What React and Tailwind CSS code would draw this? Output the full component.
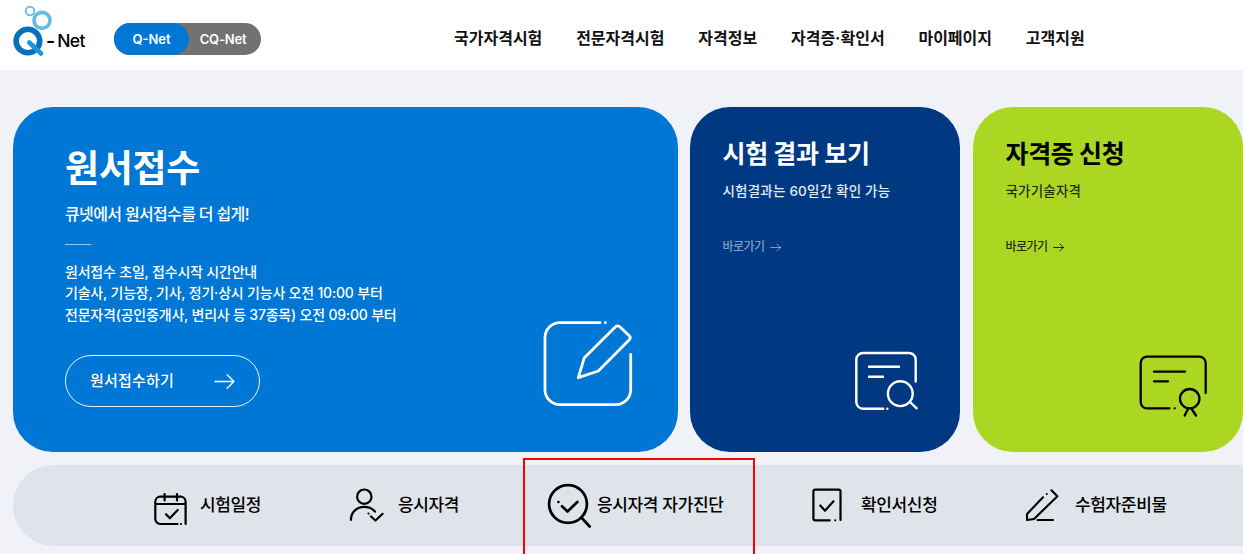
import React from "react";

const MENU = ["국가자격시험", "전문자격시험", "자격정보", "자격증·확인서", "마이페이지", "고객지원"];

function BrandMark() {
    return (
        <svg width="40" height="54" viewBox="0 0 40 54" fill="none" className="shrink-0">
            <circle cx="17" cy="7" r="4.3" stroke="#6cc0e5" strokeWidth="2" />
            <circle cx="29" cy="16.4" r="8" stroke="#62bce3" strokeWidth="3.6" />
            <circle cx="14.9" cy="37" r="11.8" stroke="#0870bd" strokeWidth="5.6" />
            <path d="M16.3 38.5L28 49.5" stroke="#1797d3" strokeWidth="4.6" strokeLinecap="round" />
        </svg>
    );
}

function Arrow({ size, strokeWidth }) {
    return (
        <svg width={size} height={size} viewBox="0 0 20 20" fill="none" stroke="currentColor" strokeWidth={strokeWidth} strokeLinecap="round" strokeLinejoin="round">
            <path d="M1 10H19M12.5 3.5L19 10L12.5 16.5" />
        </svg>
    );
}

function LineIcon({ width, height, strokeWidth, className = "", children }) {
    return (
        <svg width={width} height={height} viewBox={`0 0 ${width} ${height}`} fill="none" stroke="currentColor" strokeWidth={strokeWidth} strokeLinecap="round" strokeLinejoin="round" className={`shrink-0 ${className}`}>
            {children}
        </svg>
    );
}

function ShortcutCard({ title, text, className, textClass, linkClass, children }) {
    return (
        <article className={`flex h-[345px] shrink-0 flex-col rounded-[40px] pt-[31px] pl-[32.5px] ${className}`}>
            <h2 className="text-[25px] leading-8 font-bold tracking-[-0.35px]">{title}</h2>
            <p className={`mt-[11px] text-[13.5px] leading-5 ${textClass}`}>{text}</p>
            <a href="#" className={`mt-[36px] flex items-center gap-[5px] text-[12px] leading-5 font-medium tracking-[-0.5px] ${linkClass}`}>
                바로가기
                <Arrow size={11} strokeWidth={1.8} />
            </a>
            {children}
        </article>
    );
}

function QuickItem({ label, className, children }) {
    return (
        <a href="#" className={`flex h-12 shrink-0 items-center whitespace-nowrap ${className}`}>
            {children}
            <span className="pb-px">{label}</span>
        </a>
    );
}

export default function App() {
    return (
        <div className="relative h-[554px] w-[1243px] overflow-hidden bg-[#f1f2f7] font-['Inter','Noto_Sans_CJK_KR',sans-serif] text-black">
            <header className="flex h-[70px] items-center bg-white pl-[13px]">
                <div className="flex h-[62px] w-[101px] shrink-0 items-start">
                    <BrandMark />
                    <span className="mt-[25px] -ml-[7px] flex items-center text-[17.5px] leading-6 font-medium tracking-[-0.6px]">
                        <span className="mr-[2.5px] text-[20px] font-semibold">-</span>Net
                    </span>
                </div>
                <div className="mt-2 flex h-8 w-[147px] shrink-0 items-center rounded-full bg-[#727272] text-[13px] font-semibold text-white">
                    <span className="flex h-8 w-[75px] items-center justify-center rounded-full bg-[#0077d5] pt-px">Q-Net</span>
                    <span className="flex-1 pt-px pr-[4px] text-center tracking-[-0.2px]">CQ-Net</span>
                </div>
                <nav className="mt-[6px] ml-[193px] flex gap-[33.8px] text-[16px] leading-6 font-bold whitespace-nowrap text-[#111]">
                    {MENU.map((item) => (
                        <a key={item} href="#">{item}</a>
                    ))}
                </nav>
            </header>

            <main className="pt-[37px] pl-[13px]">
                <section className="flex">
                    <article className="flex h-[345px] w-[665px] shrink-0 justify-between rounded-[40px] bg-[#0077d5] pt-[38px] pl-[52px] text-white">
                        <div>
                            <h1 className="text-[37px] leading-[48px] font-bold tracking-[-0.3px]">원서접수</h1>
                            <p className="mt-[9px] text-[16px] leading-6 font-medium tracking-[-0.65px]">큐넷에서 원서접수를 더 쉽게!</p>
                            <div className="mt-[18px] h-px w-[26px] bg-white/60" />
                            <p className="mt-[16px] text-[14px] leading-[21.3px] font-medium tracking-[-0.2px] whitespace-nowrap">
                                원서접수 초일, 접수시작 시간안내<br />
                                기술사, 기능장, 기사, 정기·상시 기능사 오전 10:00 부터<br />
                                전문자격(공인중개사, 변리사 등 37종목) 오전 09:00 부터
                            </p>
                            <a href="#" className="mt-[30px] flex h-[52px] w-[195px] items-center justify-between rounded-full border border-white/90 pt-px pr-[24px] pl-[24px] text-[15px] font-medium tracking-[0.2px]">
                                원서접수하기
                                <Arrow size={21} strokeWidth={1.3} />
                            </a>
                        </div>
                        <div className="mr-[42px] mb-[39px] self-end">
                            <LineIcon width={96} height={96} strokeWidth={2.8}>
                                <path d="M60 5.7H20A15 15 0 0 0 5 20.7V72.7A15 15 0 0 0 20 87.7H75.7A15 15 0 0 0 90.7 72.7V37.5" />
                                <path d="M65.3 5.7h.01" />
                                <path d="M38.3 60.7L44.3 40.7L75.3 9.9Q77.8 7.8 80 9.9L89.3 18.7Q91.2 20.6 89.3 22.7L58.3 54Z" />
                            </LineIcon>
                        </div>
                    </article>

                    <ShortcutCard
                        title="시험 결과 보기"
                        text="시험결과는 60일간 확인 가능"
                        className="ml-[12px] w-[270px] bg-[#003882] text-white"
                        textClass="font-medium tracking-[0.2px] text-white/90"
                        linkClass="text-white/50"
                    >
                        <div className="mt-auto mr-[38px] mb-[36px] self-end">
                            <LineIcon width={70} height={68} strokeWidth={2.4}>
                                <path d="M31.3 60.7H11A6.7 6.7 0 0 1 4.3 54V11.7A6.7 6.7 0 0 1 11 5H57A6.7 6.7 0 0 1 63.7 11.7V33.5M35.3 60.7h.01" />
                                <path d="M17 18.7H47M17 28.7H31" />
                                <circle cx="48.3" cy="45.7" r="12.4" />
                                <path d="M58 54L64.7 60.3" />
                            </LineIcon>
                        </div>
                    </ShortcutCard>

                    <ShortcutCard
                        title="자격증 신청"
                        text="국가기술자격"
                        className="ml-[13px] w-[270px] bg-[#abd622] text-black"
                        textClass="font-medium tracking-[0.2px] text-black/80"
                        linkClass="text-black/80"
                    >
                        <div className="mt-auto mr-[33px] mb-[32px] self-end">
                            <LineIcon width={76} height={72} strokeWidth={2.3}>
                                <path d="M35.5 60.3H13A6.3 6.3 0 0 1 6.7 54V15A6.3 6.3 0 0 1 13 8.7H65.4A6.3 6.3 0 0 1 71.7 15V45M40.7 60.3h.01" />
                                <path d="M20 23.7H51M20 33.3H34" />
                                <circle cx="55.7" cy="50.7" r="9.7" />
                                <path d="M54 61L50.7 67.5M57.7 61L62 67.5" />
                            </LineIcon>
                        </div>
                    </ShortcutCard>
                </section>

                <section className="mt-[13px] flex h-[81px] w-[1290px] items-center rounded-full bg-[#dfe3ea] pl-[140px] text-[17px] leading-6 font-medium tracking-[-0.35px]">
                    <QuickItem label="시험일정" className="w-[196px] gap-[12px]">
                        <LineIcon width={35} height={35} strokeWidth={2.2} className="mt-[5px]">
                            <path d="M24.7 33H7.3A5 5 0 0 1 2.3 28V10.7A5 5 0 0 1 7.3 5.7H27.6A5 5 0 0 1 32.6 10.7V33M28 33h.01M2.3 13H32.6" />
                            <path d="M11.6 3V9.5M24 3V9.5M13 23.3L16.8 27.3L24.7 19" />
                        </LineIcon>
                    </QuickItem>
                    <QuickItem label="응시자격" className="w-[196px] gap-[13px]">
                        <LineIcon width={36} height={36} strokeWidth={2.2} className="mb-px">
                            <circle cx="15.3" cy="9.7" r="7.2" />
                            <path d="M1.9 33C1.9 25 8 19.8 15.3 19.8C19.5 19.8 23.5 21.6 26 24.6M19.5 26.6h.01M22 29.5L26.5 33.5L33.6 26.8" />
                        </LineIcon>
                    </QuickItem>
                    <QuickItem label="응시자격 자가진단" className="w-[266px] gap-[4px]">
                        <LineIcon width={48} height={48} strokeWidth={2.7}>
                            <circle cx="23" cy="22" r="18.9" />
                            <path d="M36.3 35.5L44.7 44.5M17 24.2L22.5 29.5L32.3 20M13.4 20h.01" />
                        </LineIcon>
                    </QuickItem>
                    <QuickItem label="확인서신청" className="w-[213px] gap-[18px]">
                        <LineIcon width={32} height={36} strokeWidth={2.2} className="mb-px">
                            <path d="M18.8 33.3H4.2Q2.4 33.3 2.4 31.5V4.5Q2.4 2.7 4.2 2.7H27.7Q29.5 2.7 29.5 4.5V33M24.2 33.3h.01M9.3 18.5L14 23.7L22.5 14.3" />
                        </LineIcon>
                    </QuickItem>
                    <QuickItem label="수험자준비물" className="gap-[15px]">
                        <LineIcon width={36} height={36} strokeWidth={2.1} className="mb-px">
                            <path d="M19 10.3L3 27V33L10 32L33.4 9.3L27.4 3.3M22.8 7h.01M13.5 33H29" />
                        </LineIcon>
                    </QuickItem>
                </section>
            </main>

            <div className="absolute top-[458px] left-[523px] h-[98px] w-[232px] border-2 border-[#ff0000]" />
        </div>
    );
}
